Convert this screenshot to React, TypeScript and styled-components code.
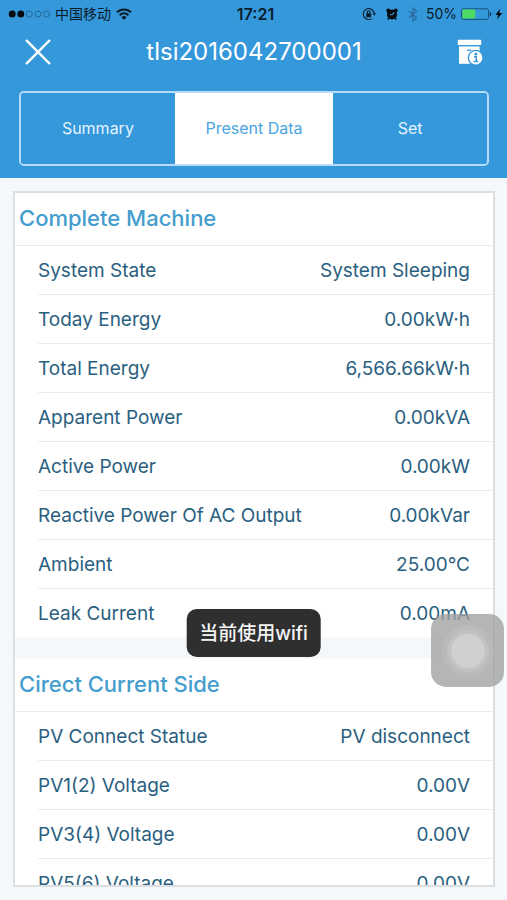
import React from "react";
import styled, { createGlobalStyle } from "styled-components";

const blue = "#3498db";
const divider = "1px solid #e9edef";
const sans = `Inter, "Noto Sans CJK SC", sans-serif`;

const GlobalStyle = createGlobalStyle`
  * { box-sizing: border-box; }
  body { margin: 0; background: #f4f8fb; font-family: ${sans}; }
`;

const Screen = styled.div`
  position: relative;
  display: flex;
  flex-direction: column;
  height: 100vh;
  overflow: hidden;
  background: #f4f8fb;
`;

const Header = styled.header`
  flex: none;
  background: ${blue};
  padding-bottom: 12px;
`;

const StatusBar = styled.div`
  display: grid;
  grid-template-columns: 1fr auto 1fr;
  align-items: center;
  height: 28px;
  padding: 0 4px 0 8px;
  color: #0b1c2b;
  font-size: 14px;
  line-height: 20px;
`;

const StatusGroup = styled.div<{ $end?: boolean }>`
  display: flex;
  align-items: center;
  justify-content: ${(p) => (p.$end ? "flex-end" : "flex-start")};
  gap: ${(p) => (p.$end ? "4px" : "5px")};
`;

const StatusIcons = styled.div`
  display: flex;
  align-items: center;
  gap: 10px;
  margin-right: 4px;
`;

const Clock = styled.time`
  font-size: 16px;
  font-weight: 600;
`;

const NavBar = styled.div`
  display: grid;
  grid-template-columns: 28px 1fr 28px;
  align-items: center;
  height: 48px;
  padding: 0 23px 0 24px;
`;

const IconButton = styled.button`
  display: flex;
  align-items: center;
  justify-content: center;
  width: 28px;
  height: 28px;
  padding: 0;
  border: 0;
  background: none;
  color: #fff;
`;

const Title = styled.h1`
  margin: 0;
  text-align: center;
  color: #fff;
  font-size: 24px;
  line-height: 32px;
  font-weight: 400;
`;

const Tabs = styled.div`
  display: grid;
  grid-template-columns: 1fr 34% 1fr;
  height: 75px;
  margin: 15px 18px 0 19px;
  border: 2px solid #b5dcf8;
  border-radius: 5px;
  overflow: hidden;
`;

const Tab = styled.button<{ $active?: boolean }>`
  padding: 0 0 2px;
  border: 0;
  background: ${(p) => (p.$active ? "#fff" : blue)};
  color: ${(p) => (p.$active ? "#4aa5df" : "#e3f4ff")};
  font-family: inherit;
  font-size: 16px;
  line-height: 20px;
`;

const Card = styled.main`
  flex: 1;
  min-height: 0;
  margin: 13px 12px 13px 13px;
  border: 2px solid #dcdfe1;
  background: #fff;
  overflow-y: auto;
  scrollbar-width: none;
`;

const Section = styled.section`
  & + & {
    border-top: 22px solid #f4f8fb;
  }
`;

const SectionTitle = styled.h2`
  margin: 0;
  padding: 0 0 2px 4px;
  border-bottom: ${divider};
  color: #459dcd;
  font-size: 22px;
  line-height: 50px;
  font-weight: 500;
`;

const TableWrap = styled.div`
  padding-left: 23px;
`;

const Table = styled.table`
  width: 100%;
  border-spacing: 0;
  color: #2a607f;
  font-size: 19px;
  line-height: 46px;

  tr:not(:last-child) > * {
    border-bottom: ${divider};
  }
`;

const Name = styled.th`
  padding: 2px 0 0;
  text-align: left;
  font-weight: 400;
`;

const Value = styled.td`
  padding: 2px 23px 0 0;
  text-align: right;
`;

const Toast = styled.div`
  position: absolute;
  left: 50%;
  bottom: 243px;
  transform: translateX(-50%);
  padding: 13px 13px 11px;
  border-radius: 10px;
  background: #2f2f30;
  color: #f5f5f5;
  font-size: 19px;
  line-height: 24px;
  font-weight: 500;
  white-space: nowrap;
`;

const TouchButton = styled.button`
  position: absolute;
  right: 3px;
  bottom: 213px;
  display: flex;
  align-items: center;
  justify-content: center;
  width: 73px;
  height: 73px;
  padding: 0;
  border: 0;
  border-radius: 15px;
  background: rgba(160, 160, 160, 0.78);
`;

const TouchRing = styled.span`
  display: block;
  width: 34px;
  height: 34px;
  border-radius: 50%;
  background: #d0d0d0;
  box-shadow: 0 0 0 4px rgba(205, 205, 205, 0.45), 0 0 0 9px rgba(200, 200, 200, 0.3);
`;

const Signal = () => (
  <svg width="42" height="10" viewBox="0 0 42 10" aria-label="Signal strength">
    <circle cx="4.2" cy="5" r="3.5" fill="#050a10" />
    <circle cx="12.8" cy="5" r="3.5" fill="#050a10" />
    <g fill="none" stroke="#23648f" strokeWidth="0.9">
      <circle cx="21.3" cy="5" r="3" />
      <circle cx="30" cy="5" r="3" />
      <circle cx="38.5" cy="5" r="3" />
    </g>
  </svg>
);

const Wifi = () => (
  <svg width="16" height="12" viewBox="0 0 16 12" aria-label="Wi-Fi">
    <g fill="none" stroke="#0b1c2b" strokeWidth="2">
      <path d="M0.9 4.4a10 10 0 0 1 14.2 0" />
      <path d="M3.6 7.2a6.2 6.2 0 0 1 8.8 0" />
    </g>
    <path d="M8 12 5.4 9.3a3.7 3.7 0 0 1 5.2 0z" fill="#0b1c2b" />
  </svg>
);

const RotationLock = () => (
  <svg width="14" height="14" viewBox="0 0 14 14" aria-label="Rotation lock">
    <path d="M9.8 11.6a5.5 5.5 0 1 1 2.4-5.2" fill="none" stroke="#0b1c2b" strokeWidth="1.1" />
    <path d="M10.4 6.2H14l-1.7 2.6z" fill="#0b1c2b" />
    <rect x="4.2" y="6.2" width="5" height="4" rx="0.5" fill="#0b1c2b" />
    <path d="M5.3 6.4V5.1a1.4 1.4 0 0 1 2.8 0v1.3" fill="none" stroke="#0b1c2b" strokeWidth="1.1" />
  </svg>
);

const Alarm = () => (
  <svg width="12" height="12" viewBox="0 0 12 12" aria-label="Alarm">
    <circle cx="6" cy="6.4" r="5" fill="#050a10" />
    <circle cx="2.2" cy="2.4" r="1.9" fill="#050a10" />
    <circle cx="9.8" cy="2.4" r="1.9" fill="#050a10" />
    <path d="M2.8 9.8 1.8 11.6M9.2 9.8l1 1.8" stroke="#050a10" strokeWidth="1.4" />
    <path d="M8.2 4.2 6.2 6.8H3.8" fill="none" stroke="#3b9add" strokeWidth="1.1" />
  </svg>
);

const Bluetooth = () => (
  <svg width="10" height="15" viewBox="0 0 10 15" aria-label="Bluetooth">
    <path d="M1 4.2 8.6 10.8 5 14V1l3.6 3.2L1 10.8" fill="none" stroke="#2a6a9a" strokeWidth="1.2" />
  </svg>
);

const Battery = () => (
  <svg width="42" height="12" viewBox="0 0 42 12" aria-label="Battery charging">
    <rect x="0.5" y="0.8" width="27" height="10.6" rx="1.8" fill="none" stroke="#17517c" />
    <rect x="1.3" y="1.6" width="13" height="9" rx="0.8" fill="#4cd964" />
    <path d="M28.8 4v4.2q1.6-.5 1.6-2.1T28.8 4z" fill="#0b2c48" />
    <path d="M39.4 .6 34.4 7h2.8l-1.2 4.6L41.2 5h-3z" fill="#050a10" />
  </svg>
);

const Cross = () => (
  <svg width="26" height="26" viewBox="0 0 26 26" aria-hidden="true">
    <path d="M1.7 1.7l22.6 22.6M24.3 1.7 1.7 24.3" stroke="#fff" strokeWidth="2.4" strokeLinecap="round" />
  </svg>
);

const ArchiveInfo = () => (
  <svg width="26" height="26" viewBox="0 0 26 26" aria-hidden="true">
    <rect x="0.8" y="0.8" width="23.4" height="5.2" rx="0.6" fill="#fff" />
    <path d="M2 7.4h20.6v17.4H2z" fill="#fff" />
    <path d="M10 11.2h4.4" stroke={blue} strokeWidth="1.3" />
    <circle cx="18.7" cy="18.8" r="8" fill={blue} />
    <circle cx="18.7" cy="18.8" r="6.7" fill="#fff" />
    <circle cx="18.9" cy="15.2" r="1.4" fill={blue} />
    <path d="M17 17.7h2.3v4.6M16.6 22.5h4.6" fill="none" stroke={blue} strokeWidth="1.5" />
  </svg>
);

const tabs = ["Summary", "Present Data", "Set"];

const sections = [
  {
    title: "Complete Machine",
    rows: [
      ["System State", "System Sleeping"],
      ["Today Energy", "0.00kW·h"],
      ["Total Energy", "6,566.66kW·h"],
      ["Apparent Power", "0.00kVA"],
      ["Active Power", "0.00kW"],
      ["Reactive Power Of AC Output", "0.00kVar"],
      ["Ambient", "25.00°C"],
      ["Leak Current", "0.00mA"],
    ],
  },
  {
    title: "Cirect Current Side",
    rows: [
      ["PV Connect Statue", "PV disconnect"],
      ["PV1(2) Voltage", "0.00V"],
      ["PV3(4) Voltage", "0.00V"],
      ["PV5(6) Voltage", "0.00V"],
    ],
  },
];

export default function App() {
  return (
    <Screen>
      <GlobalStyle />
      <Header>
        <StatusBar>
          <StatusGroup>
            <Signal />
            <span>中国移动</span>
            <Wifi />
          </StatusGroup>
          <Clock>17:21</Clock>
          <StatusGroup $end>
            <StatusIcons>
              <RotationLock />
              <Alarm />
              <Bluetooth />
            </StatusIcons>
            <span>50%</span>
            <Battery />
          </StatusGroup>
        </StatusBar>
        <NavBar>
          <IconButton type="button" aria-label="Close">
            <Cross />
          </IconButton>
          <Title>tlsi2016042700001</Title>
          <IconButton type="button" aria-label="Device information">
            <ArchiveInfo />
          </IconButton>
        </NavBar>
        <Tabs role="tablist">
          {tabs.map((label) => (
            <Tab
              key={label}
              type="button"
              role="tab"
              aria-selected={label === "Present Data"}
              $active={label === "Present Data"}
            >
              {label}
            </Tab>
          ))}
        </Tabs>
      </Header>
      <Card>
        {sections.map((section) => (
          <Section key={section.title}>
            <SectionTitle>{section.title}</SectionTitle>
            <TableWrap>
              <Table aria-label={section.title}>
                <tbody>
                  {section.rows.map(([name, value]) => (
                    <tr key={name}>
                      <Name scope="row">{name}</Name>
                      <Value>{value}</Value>
                    </tr>
                  ))}
                </tbody>
              </Table>
            </TableWrap>
          </Section>
        ))}
      </Card>
      <Toast role="status">当前使用wifi</Toast>
      <TouchButton type="button" aria-label="Assistive touch">
        <TouchRing />
      </TouchButton>
    </Screen>
  );
}
